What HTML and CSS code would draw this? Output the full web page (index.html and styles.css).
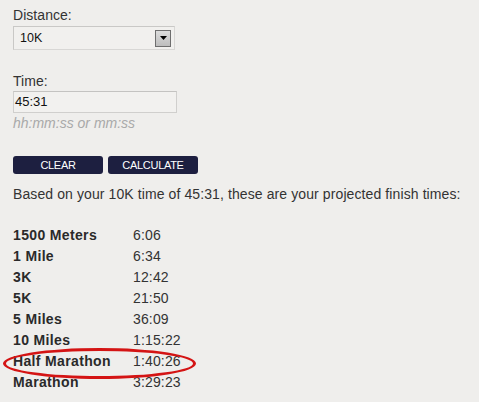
FILE: index.html
```html
<!DOCTYPE html>
<html>
<head>
<meta charset="utf-8">
<link rel="stylesheet" href="styles.css">
</head>
<body>
<div class="page">
  <div class="label">Distance:</div>
  <div class="select">
    <span class="select-value">10K</span>
    <span class="select-btn"><svg width="7" height="4" viewBox="0 0 7 4"><path d="M0 0H7L3.5 4Z" fill="#000"/></svg></span>
  </div>
  <div class="label label-time">Time:</div>
  <div class="input">45:31</div>
  <div class="hint">hh:mm:ss or mm:ss</div>
  <div class="buttons">
    <span class="btn">CLEAR</span>
    <span class="btn">CALCULATE</span>
  </div>
  <div class="summary">Based on your 10K time of 45:31, these are your projected finish times:</div>
  <div class="results">
    <div class="name">1500 Meters</div><div class="time">6:06</div>
    <div class="name">1 Mile</div><div class="time">6:34</div>
    <div class="name">3K</div><div class="time">12:42</div>
    <div class="name">5K</div><div class="time">21:50</div>
    <div class="name">5 Miles</div><div class="time">36:09</div>
    <div class="name">10 Miles</div><div class="time">1:15:22</div>
    <div class="name">Half Marathon</div><div class="time">1:40:26</div>
    <div class="name">Marathon</div><div class="time">3:29:23</div>
    <div class="circle"></div>
  </div>
</div>
</body>
</html>
```
FILE: styles.css
```css
html, body {
  margin: 0;
  background: #efeeec;
}
.page {
  padding: 7px 13px 0;
  font-family: "Liberation Sans", Arial, sans-serif;
  font-size: 14px;
  line-height: 16px;
  color: #333;
}
.label {
  color: #333;
  letter-spacing: 0.05px;
}
.select {
  margin-top: 3px;
  height: 22px;
  border: 1px solid #c9c8c6;
  border-right-color: #d8d7d5;
  border-bottom-color: #d8d7d5;
  background: #f1f0ee;
  display: flex;
  align-items: center;
  justify-content: space-between;
  padding-left: 6px;
  padding-right: 3px;
  box-sizing: content-box;
  width: 151px;
}
.select-value {
  font-size: 12.5px;
  color: #111;
}
.select-btn {
  width: 14px;
  height: 15px;
  border: 1px solid #6e6e6e;
  background: linear-gradient(#dcdcdc, #bdbdbd);
  display: flex;
  align-items: center;
  justify-content: center;
}
.label-time {
  margin-top: 23px;
}
.input {
  margin-top: 2px;
  width: 161px;
  height: 20px;
  border: 1px solid #d0cfcd;
  border-top-color: #c4c3c1;
  background: #f2f1ef;
  padding-left: 1px;
  font-size: 13px;
  line-height: 20px;
  color: #111;
}
.hint {
  margin-top: 2px;
  font-style: italic;
  color: #a9a9a9;
}
.buttons {
  margin-top: 25px;
  display: flex;
  gap: 5px;
}
.btn {
  width: 90px;
  height: 18px;
  border-radius: 3px;
  background: #1d1f40;
  color: #fff;
  font-size: 11px;
  letter-spacing: -0.3px;
  line-height: 18px;
  text-align: center;
}
.summary {
  margin-top: 12px;
  color: #333;
  letter-spacing: 0.1px;
}
.results {
  position: relative;
  margin-top: 23px;
  display: grid;
  grid-template-columns: 120px auto;
  line-height: 21px;
}
.name {
  font-weight: bold;
  color: #2a2a2a;
  letter-spacing: 0.35px;
}
.time {
  color: #333;
  letter-spacing: 0.15px;
}
.circle {
  position: absolute;
  left: -10px;
  top: 123px;
  width: 187px;
  height: 25px;
  border: 3px solid #d41414;
  border-radius: 50%;
}
```
